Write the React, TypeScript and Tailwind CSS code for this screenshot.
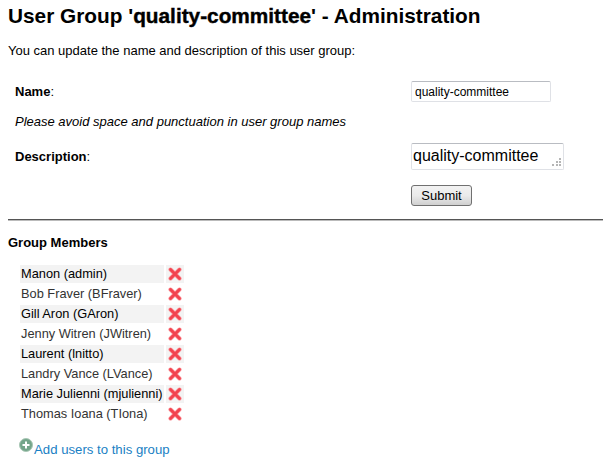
import React from 'react';

const members = [
  'Manon (admin)',
  'Bob Fraver (BFraver)',
  'Gill Aron (GAron)',
  'Jenny Witren (JWitren)',
  'Laurent (lnitto)',
  'Landry Vance (LVance)',
  'Marie Julienni (mjulienni)',
  'Thomas Ioana (TIona)',
];

const RemoveIcon = () => (
  <svg width="14" height="14" viewBox="0 0 14 14">
    <path d="M2.5 2.5 L11.5 11.5 M11.5 2.5 L2.5 11.5" stroke="#f9888f" strokeWidth="4" strokeLinecap="round" />
    <path d="M2.5 2.5 L11.5 11.5 M11.5 2.5 L2.5 11.5" stroke="#f2444f" strokeWidth="2.6" strokeLinecap="round" />
  </svg>
);

const AddIcon = () => (
  <svg width="14" height="14" viewBox="0 0 14 14" className="shrink-0">
    <circle cx="7" cy="7" r="6.5" fill="#74a58a" stroke="#a9c7b5" />
    <path d="M7 3.5 V10.5 M3.5 7 H10.5" stroke="#fff" strokeWidth="2" />
  </svg>
);

export default function App() {
  return (
    <div className="w-[603px] h-[466px] overflow-hidden bg-white text-black font-['Liberation_Sans',Arial,sans-serif] text-[13px] leading-[15px]">
      <h1 className="pl-2 pt-[4px] text-[20.8px] leading-[24px] font-bold">
        User Group '<span className="[-webkit-text-stroke:0.4px_black]">quality-committee</span>' - Administration
      </h1>

      <p className="pl-2 mt-[15px]">You can update the name and description of this user group:</p>

      <div className="flex flex-col pl-[15px] mt-[23px]">
        <div className="flex items-center h-[21px]">
          <div className="w-[396px]"><b>Name</b>:</div>
          <input
            defaultValue="quality-committee"
            className="w-[140px] h-[21px] px-[3px] bg-white border border-[#dfe1e6] border-t-[#b9bcc2] rounded-[2px] text-[12px] outline-none"
          />
        </div>
        <div className="mt-[12px] italic">Please avoid space and punctuation in user group names</div>
        <div className="flex items-center mt-[14px] h-[27px]">
          <div className="w-[396px]"><b>Description</b>:</div>
          <div className="relative w-[153px] h-[27px] pl-[1px] bg-white border border-[#dfe1e6] border-t-[#b9bcc2] rounded-[2px] text-[16px] leading-[24px]">
            quality-committee
            <svg width="12" height="12" viewBox="0 0 12 12" className="absolute right-[1px] bottom-[1px]">
              <g fill="#b5b5b5">
                <rect x="9" y="2" width="2" height="2" />
                <rect x="6" y="5" width="2" height="2" />
                <rect x="9" y="5" width="2" height="2" />
                <rect x="2" y="8" width="2" height="2" />
                <rect x="6" y="8" width="2" height="2" />
                <rect x="9" y="8" width="2" height="2" />
              </g>
            </svg>
          </div>
        </div>
        <div className="pl-[396px] mt-[15px]">
          <button className="block w-[61px] h-[21px] border border-[#707070] rounded-[3px] bg-gradient-to-b from-[#f2f2f2] via-[#ebebeb] to-[#d0d0d0] text-[13px] leading-[17px] text-black">
            Submit
          </button>
        </div>
      </div>

      <div className="ml-2 mt-[13px] h-[2px] border-t border-[#555] border-b border-b-[#bbb]" />

      <h2 className="pl-2 mt-[14px] font-bold">Group Members</h2>

      <div className="flex flex-col pl-5 mt-[15px] text-[12.8px]">
        {members.map((name, i) => (
          <div key={name} className="flex h-[20px]">
            <div className={`w-[144px] h-[18px] leading-[18px] whitespace-nowrap pl-px ${i % 2 === 0 ? 'bg-[#f3f3f3] text-black' : 'text-[#333]'}`}>
              {name}
            </div>
            <div className={`ml-[2px] w-[18px] h-[18px] flex items-center justify-center ${i % 2 === 0 ? 'bg-[#f3f3f3]' : ''}`}>
              <RemoveIcon />
            </div>
          </div>
        ))}
      </div>

      <div className="flex items-start pl-[19px] mt-[13px] text-[13.2px] text-[#1a7fc4]">
        <AddIcon />
        <a href="#" className="ml-px mt-[4px]">Add users to this group</a>
      </div>
    </div>
  );
}
